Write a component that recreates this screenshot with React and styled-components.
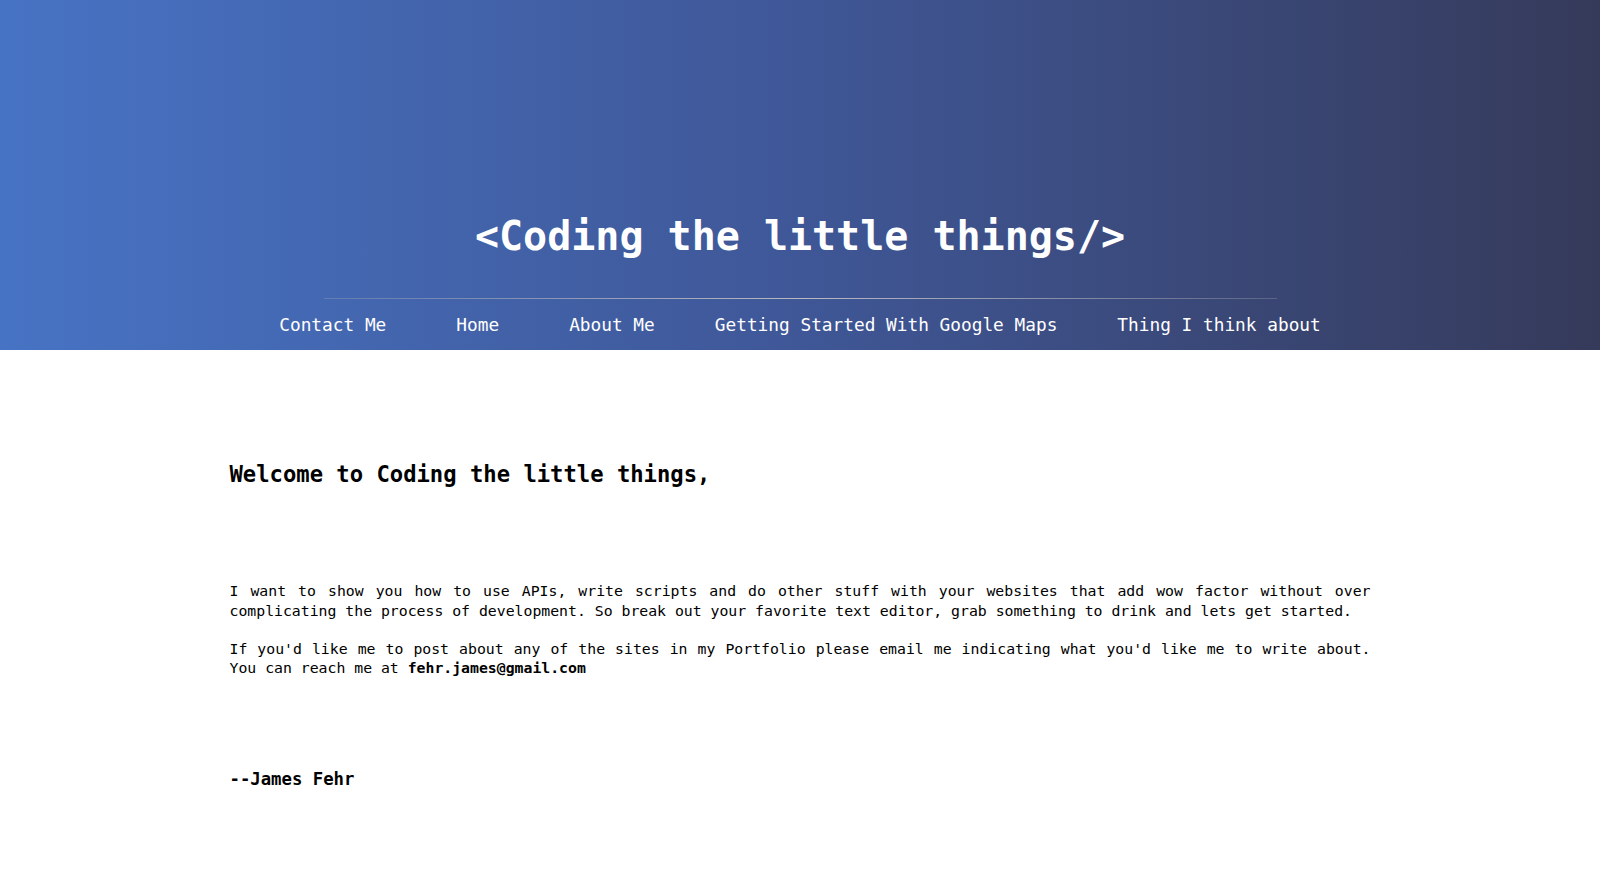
import React from 'react';
import styled, { createGlobalStyle } from 'styled-components';

const GlobalStyle = createGlobalStyle`
  html, body {
    margin: 0;
    padding: 0;
    background: #ffffff;
  }
  body {
    font-family: "DejaVu Sans Mono", "Liberation Mono", monospace;
    color: #000;
  }
`;

const Header = styled.header`
  height: 350px;
  background: linear-gradient(90deg, #4773c4 0%, #3f5797 50%, #353a5a 100%);
  display: flex;
  flex-direction: column;
  justify-content: flex-end;
  align-items: center;
  color: #fff;
`;

const Title = styled.h1`
  margin: 0 0 37px;
  font-size: 40px;
  line-height: 50px;
  font-weight: bold;
`;

const Rule = styled.hr`
  margin: 0;
  border: none;
  height: 1px;
  width: 953px;
  background: linear-gradient(90deg, rgba(170,170,180,0.3) 0%, #b9b9c2 50%, rgba(170,170,180,0.3) 100%);
`;

const Nav = styled.nav`
  height: 51px;
  display: flex;
  align-items: center;
  justify-content: center;
  gap: 60px;
`;

const NavLink = styled.a`
  color: #fff;
  text-decoration: none;
  font-size: 17.8px;
  line-height: 51px;
  white-space: nowrap;
  margin-right: ${(p) => (p.$wide ? '10px' : '0')};
`;

const Main = styled.main`
  width: 1141px;
  margin: 0 auto;
  padding-top: 109px;
`;

const Welcome = styled.h2`
  margin: 0 0 92px;
  font-size: 22.2px;
  line-height: 30px;
  font-weight: bold;
`;

const Para = styled.p`
  margin: 0 0 18px;
  font-size: 14.8px;
  line-height: 19.8px;
  text-align: justify;
`;

const Signature = styled.h3`
  margin: 89px 0 0;
  font-size: 17.3px;
  line-height: 24px;
  font-weight: bold;
`;

const links = [
  { label: 'Contact Me', wide: true },
  { label: 'Home', wide: true },
  { label: 'About Me' },
  { label: 'Getting Started With Google Maps' },
  { label: 'Thing I think about' },
];

export default function App() {
  return (
    <>
      <GlobalStyle />
      <Header>
        <Title>&lt;Coding the little things/&gt;</Title>
        <Rule />
        <Nav>
          {links.map((l) => (
            <NavLink key={l.label} href="#" $wide={l.wide}>{l.label}</NavLink>
          ))}
        </Nav>
      </Header>
      <Main>
        <Welcome>Welcome to Coding the little things,</Welcome>
        <Para>
          I want to show you how to use APIs, write scripts and do other stuff with your websites that add wow factor without over complicating the process of development. So break out your favorite text editor, grab something to drink and lets get started.
        </Para>
        <Para>
          If you'd like me to post about any of the sites in my Portfolio please email me indicating what you'd like me to write about. You can reach me at <b>fehr.james@gmail.com</b>
        </Para>
        <Signature>--James Fehr</Signature>
      </Main>
    </>
  );
}
